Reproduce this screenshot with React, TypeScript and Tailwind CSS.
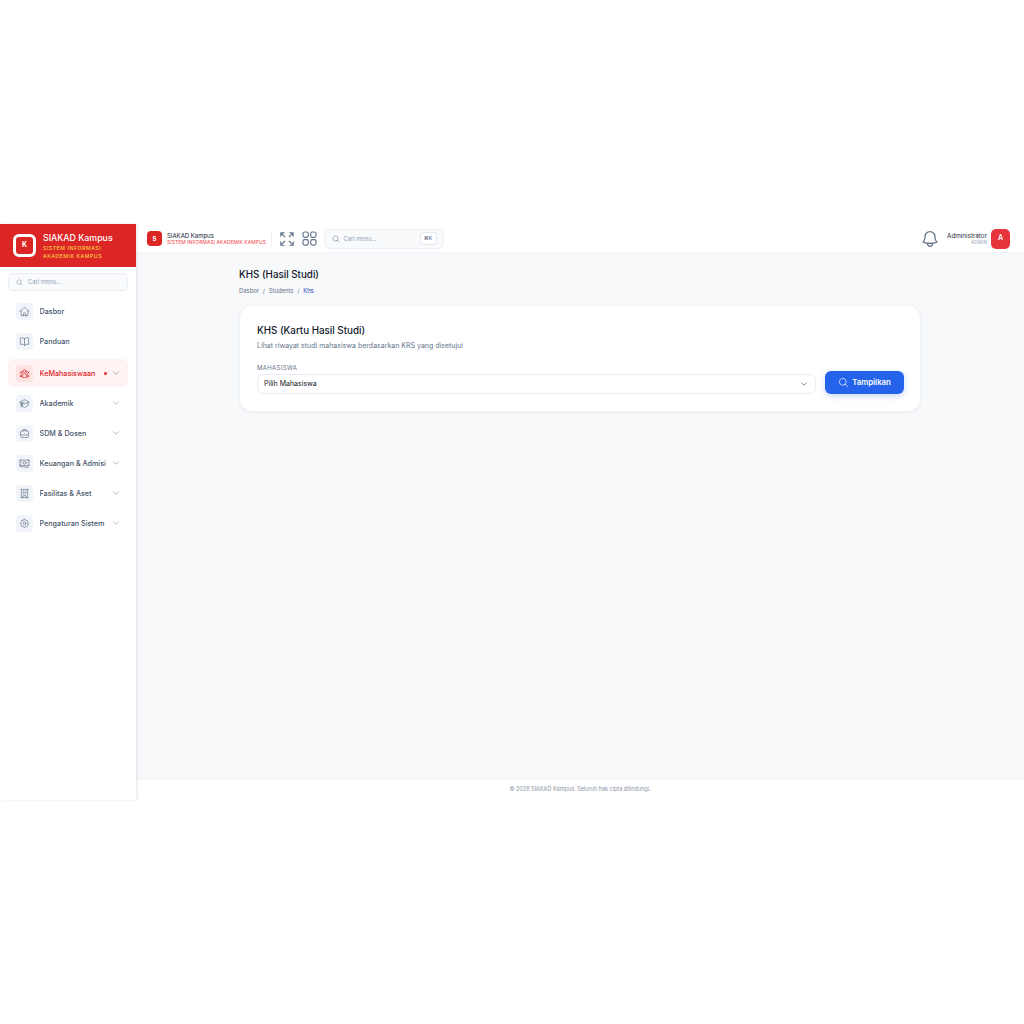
import React from "react";
import {
  HiOutlineHome,
  HiOutlineBookOpen,
  HiOutlineUserGroup,
  HiOutlineAcademicCap,
  HiOutlineBriefcase,
  HiOutlineBanknotes,
  HiOutlineBuildingOffice,
  HiOutlineCog8Tooth,
  HiOutlineMagnifyingGlass,
  HiOutlineChevronDown,
  HiOutlineBell,
  HiOutlineSquares2X2,
  HiOutlineArrowsPointingOut,
} from "react-icons/hi2";

const items = [
  { label: "Dasbor", Icon: HiOutlineHome },
  { label: "Panduan", Icon: HiOutlineBookOpen },
  { label: "KeMahasiswaan", Icon: HiOutlineUserGroup, active: true, chevron: true },
  { label: "Akademik", Icon: HiOutlineAcademicCap, chevron: true },
  { label: "SDM & Dosen", Icon: HiOutlineBriefcase, chevron: true },
  { label: "Keuangan & Admisi", Icon: HiOutlineBanknotes, chevron: true },
  { label: "Fasilitas & Aset", Icon: HiOutlineBuildingOffice, chevron: true },
  { label: "Pengaturan Sistem", Icon: HiOutlineCog8Tooth, chevron: true },
];

export default function App() {
  return (
    <div className="min-h-screen flex items-center bg-white font-['Inter','Liberation_Sans',sans-serif]">
      <div className="w-full h-[576px] flex bg-[#f8f9fb]">
        <aside className="w-[136px] shrink-0 bg-white flex flex-col shadow-[1px_0_3px_rgba(15,23,42,0.1)] z-10">
          <div className="h-[43px] bg-[#dc2626] flex items-center pl-[13px] gap-[7px]">
            <div className="w-[23px] h-[23px] rounded-[6px] bg-[#dc2626] border-[3px] border-white flex items-center justify-center text-white text-[7px] font-bold">
              K
            </div>
            <div className="flex flex-col">
              <div className="text-white text-[8.8px] leading-[13px] font-medium whitespace-nowrap">SIAKAD Kampus</div>
              <div className="text-[#fde047] text-[5.2px] leading-[8.5px] font-normal tracking-[0.55px] whitespace-nowrap">
                SISTEM INFORMASI
                <br />
                AKADEMIK KAMPUS
              </div>
            </div>
          </div>
          <div className="px-2 pt-[6px] pb-[3px]">
            <div className="h-[18px] rounded-[6px] border border-[#e9edf3] bg-[#f8fafc] flex items-center pl-[7px] gap-[5px] text-[#94a3b8]">
              <HiOutlineMagnifyingGlass className="w-[7px] h-[7px] text-[#64748b]" />
              <span className="text-[5.8px]">Cari menu...</span>
            </div>
          </div>
          <nav className="px-2 pt-[3px] flex flex-col gap-[2px]">
            {items.map(({ label, Icon, active, chevron }) => (
              <div
                key={label}
                className={`h-[28px] rounded-[6px] flex items-center pl-2 pr-[8px] ${active ? "bg-[#fef2f2] mt-[2px]" : ""}`}
              >
                <div
                  className={`w-[17px] h-[17px] rounded-[4px] flex items-center justify-center shrink-0 ${
                    active ? "bg-[#fee2e2] text-[#dc2626]" : "bg-[#f1f5f9] text-[#64748b]"
                  }`}
                >
                  <Icon className="w-[11px] h-[11px]" />
                </div>
                <span
                  className={`ml-[6.5px] pt-[2px] text-[7.2px] font-medium whitespace-nowrap flex-1 overflow-hidden ${
                    active ? "text-[#dc2626]" : "text-[#475569]"
                  }`}
                >
                  {label}
                </span>
                {active && <span className="w-[3px] h-[3px] bg-[#ef4444] rounded-[1px] mr-[3px] ml-[2px]" />}
                {chevron && <HiOutlineChevronDown className="w-[8px] h-[8px] ml-[2px] text-[#64748b] shrink-0" />}
              </div>
            ))}
          </nav>
        </aside>

        <div className="flex-1 flex flex-col min-w-0">
          <header className="h-[29px] bg-white flex items-center pt-[1px] pl-[11px] pr-[14px] border-b border-[#f1f5f9]">
            <div className="w-[15px] h-[15px] rounded-[4px] bg-[#dc2626] text-white text-[6px] font-bold flex items-center justify-center">
              S
            </div>
            <div className="ml-[5px] w-[98px] flex flex-col">
              <span className="text-[6px] leading-[7px] font-normal text-[#0f172a] whitespace-nowrap">SIAKAD Kampus</span>
              <span className="text-[4.9px] leading-[6px] text-[#ef4444] tracking-[0.1px] whitespace-nowrap">
                SISTEM INFORMASI AKADEMIK KAMPUS
              </span>
            </div>
            <div className="w-px h-[16px] bg-[#eef0f4] ml-[6px]" />
            <HiOutlineArrowsPointingOut className="w-[18px] h-[18px] ml-[5.5px] text-[#64748b]" />
            <HiOutlineSquares2X2 className="w-[19px] h-[19px] ml-[4px] text-[#64748b]" />
            <div className="ml-[5px] w-[120px] h-[20px] rounded-[7px] border border-[#e9edf3] bg-[#f8fafc] flex items-center pl-[7px] pr-[6px]">
              <HiOutlineMagnifyingGlass className="w-[8px] h-[8px] text-[#64748b]" />
              <span className="ml-[4px] pt-[1px] text-[5.8px] text-[#94a3b8] flex-1">Cari menu...</span>
              <span className="w-[17px] h-[13px] rounded-[3px] border border-[#e2e8f0] bg-white text-[5px] font-medium text-[#64748b] flex items-center justify-center">
                ⌘K
              </span>
            </div>
            <div className="flex-1" />
            <HiOutlineBell className="w-[20px] h-[20px] text-[#64748b]" />
            <div className="ml-[7px] pt-[1px] flex flex-col items-end">
              <span className="text-[6.3px] leading-[7px] font-normal text-[#1e293b]">Administrator</span>
              <span className="text-[4.5px] leading-[6px] text-[#94a3b8] tracking-[0.2px]">ADMIN</span>
            </div>
            <div className="ml-[4px] w-[19px] h-[20px] rounded-[5px] bg-[#e5343b] text-white text-[7px] font-semibold flex items-center justify-center">
              A
            </div>
          </header>

          <main className="flex-1 px-[103px] pt-[14px]">
            <h1 className="mt-[1px] text-[9.8px] leading-[14px] font-medium text-[#0f172a]">KHS (Hasil Studi)</h1>
            <div className="mt-[5px] text-[5.9px] leading-[8px] text-[#64748b] flex gap-[3.8px]">
              <span>Dasbor</span>
              <span>/</span>
              <span>Students</span>
              <span>/</span>
              <span className="text-[#1e40af]">Khs</span>
            </div>
            <section className="mt-[10px] h-[107px] rounded-[13px] bg-white border border-[#f1f5f9] shadow-[0_1px_3px_rgba(15,23,42,0.05)] pl-[17px] pr-[16px] pt-[18px]">
              <h2 className="text-[9.8px] leading-[14px] font-medium text-[#0f172a]">KHS (Kartu Hasil Studi)</h2>
              <p className="mt-[3px] text-[7px] leading-[9px] text-[#64748b]">
                Lihat riwayat studi mahasiswa berdasarkan KRS yang disetujui
              </p>
              <div className="mt-[14px] flex items-end gap-[9px]">
                <div className="flex-1">
                  <div className="text-[6px] leading-[8px] font-normal tracking-[0.35px] text-[#64748b]">MAHASISWA</div>
                  <div className="mt-[2px] h-[20px] rounded-[6px] border border-[#e9edf3] bg-white flex items-center pl-[6px] pr-[7px]">
                    <span className="flex-1 text-[7px] font-normal text-[#0f172a]">Pilih Mahasiswa</span>
                    <HiOutlineChevronDown className="w-[8px] h-[8px] text-[#475569]" strokeWidth={2} />
                  </div>
                </div>
                <button className="w-[79px] h-[23px] rounded-[6px] bg-[#2563eb] text-white text-[7.8px] font-semibold flex items-center justify-center gap-[3px] shadow-[0_2px_6px_rgba(37,99,235,0.25)]">
                  <HiOutlineMagnifyingGlass className="w-[11px] h-[11px]" />
                  Tampilkan
                </button>
              </div>
            </section>
          </main>

          <footer className="h-[21px] pb-[1px] bg-white border-t border-[#f1f5f9] flex items-center justify-center text-[5.5px] text-[#8b95a7]">
            © 2026 SIAKAD Kampus. Seluruh hak cipta dilindungi.
          </footer>
        </div>
      </div>
    </div>
  );
}
